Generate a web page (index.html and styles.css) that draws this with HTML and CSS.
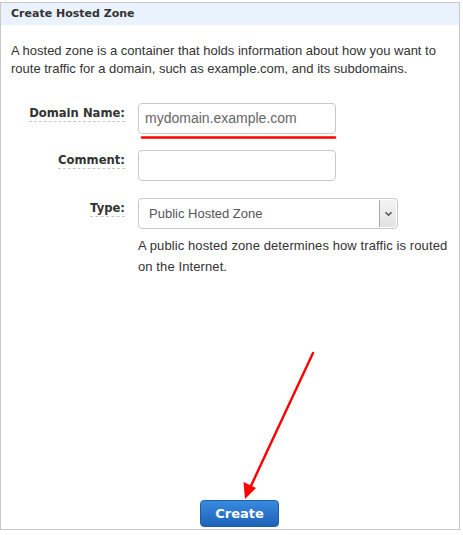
FILE: index.html
```html
<!DOCTYPE html>
<html>
<head>
<meta charset="utf-8">
<link rel="stylesheet" href="styles.css">
</head>
<body>
<div class="panel">
  <div class="header">Create Hosted Zone</div>
  <div class="content">
    <p class="intro">A hosted zone is a container that holds information about how you want to route traffic for a domain, such as example.com, and its subdomains.</p>
    <div class="form">
      <div class="row">
        <div class="label"><span>Domain Name:</span></div>
        <div class="field"><div class="input">mydomain.example.com</div></div>
      </div>
      <div class="row">
        <div class="label"><span>Comment:</span></div>
        <div class="field"><div class="input"></div></div>
      </div>
      <div class="row row-type">
        <div class="label"><span>Type:</span></div>
        <div class="field">
          <div class="select">
            <span class="select-text">Public Hosted Zone</span>
            <span class="select-btn">
              <svg width="9" height="6" viewBox="0 0 9 6"><path d="M1.5 1.2 L4.5 4.2 L7.5 1.2" fill="none" stroke="#555" stroke-width="1.6"/></svg>
            </span>
          </div>
          <p class="help">A public hosted zone determines how traffic is routed on the Internet.</p>
        </div>
      </div>
    </div>
    <div class="footer"><button class="btn">Create</button></div>
  </div>
  <svg class="annot" width="463" height="535" viewBox="0 0 463 535">
    <line x1="142" y1="137.5" x2="335" y2="137.5" stroke="#f00" stroke-width="2.6" stroke-linecap="round"/>
    <line x1="313" y1="353" x2="250" y2="488" stroke="#f00" stroke-width="2.4" stroke-linecap="round"/>
    <polygon points="245,499 243.5,482 256,488" fill="#f00"/>
  </svg>
</div>
</body>
</html>
```
FILE: styles.css
```css
html, body { margin: 0; padding: 0; background: #fff; }
body { width: 463px; height: 535px; overflow: hidden; }
.panel {
  position: relative;
  margin-top: 2px;
  width: 458px;
  height: 526px;
  border: 1px solid #c8c8c8;
  display: flex;
  flex-direction: column;
}
.header {
  height: 22px;
  line-height: 22px;
  background: #eaf2fd;
  padding-left: 10px;
  font-family: "DejaVu Sans", Verdana, sans-serif;
  font-weight: bold;
  font-size: 11px;
  color: #333;
}
.content {
  flex: 1;
  display: flex;
  flex-direction: column;
  padding: 0 0 0 10px;
}
.intro {
  margin: 17px 0 0 0;
  width: 442px;
  font-family: "Liberation Sans", Arial, sans-serif;
  font-size: 13px;
  line-height: 18px;
  color: #333;
}
.form {
  margin-top: 25px;
  display: flex;
  flex-direction: column;
  gap: 16px;
}
.row {
  display: flex;
  gap: 13px;
}
.row-type { margin-top: 1px; }
.label {
  width: 114px;
  text-align: right;
  padding-top: 3px;
  font-family: "DejaVu Sans", Verdana, sans-serif;
  font-weight: bold;
  font-size: 11.6px;
  color: #333;
}
.label span {
  border-bottom: 1px dashed #c8c8c8;
  padding-bottom: 1px;
}
.field { display: flex; flex-direction: column; }
.input {
  width: 184px;
  height: 29px;
  border: 1px solid #c8c8c8;
  border-radius: 4px;
  padding: 0 6px;
  font-family: "Liberation Sans", Arial, sans-serif;
  font-size: 14px;
  line-height: 29px;
  color: #666;
}
.select {
  width: 258px;
  height: 29px;
  border: 1px solid #c8c8c8;
  border-radius: 4px;
  display: flex;
  align-items: center;
  justify-content: space-between;
  font-family: "Liberation Sans", Arial, sans-serif;
  font-size: 13px;
  color: #555;
  overflow: hidden;
}
.select-text { padding-left: 10px; }
.select-btn {
  width: 16px;
  height: 27px;
  margin-right: 1px;
  border-left: 1px solid #aaa;
  background: linear-gradient(#f4f4f4, #e2e2e2);
  display: flex;
  align-items: center;
  justify-content: center;
  border-radius: 0 3px 3px 0;
}
.help {
  margin: 6px 0 0 0;
  width: 312px;
  font-family: "Liberation Sans", Arial, sans-serif;
  font-size: 13px;
  letter-spacing: 0.1px;
  line-height: 21px;
  color: #333;
}
.footer {
  margin-top: auto;
  display: flex;
  justify-content: center;
  padding-bottom: 2px;
  padding-left: 9px;
}
.btn {
  width: 79px;
  height: 27px;
  border: 1px solid #1b5ea8;
  border-radius: 4px;
  background: linear-gradient(#3a8ae0, #1c63b8);
  color: #fff;
  font-family: "DejaVu Sans", Verdana, sans-serif;
  font-weight: bold;
  font-size: 13px;
  padding: 0;
}
.annot {
  position: absolute;
  left: -1px;
  top: -3px;
  pointer-events: none;
}
```
